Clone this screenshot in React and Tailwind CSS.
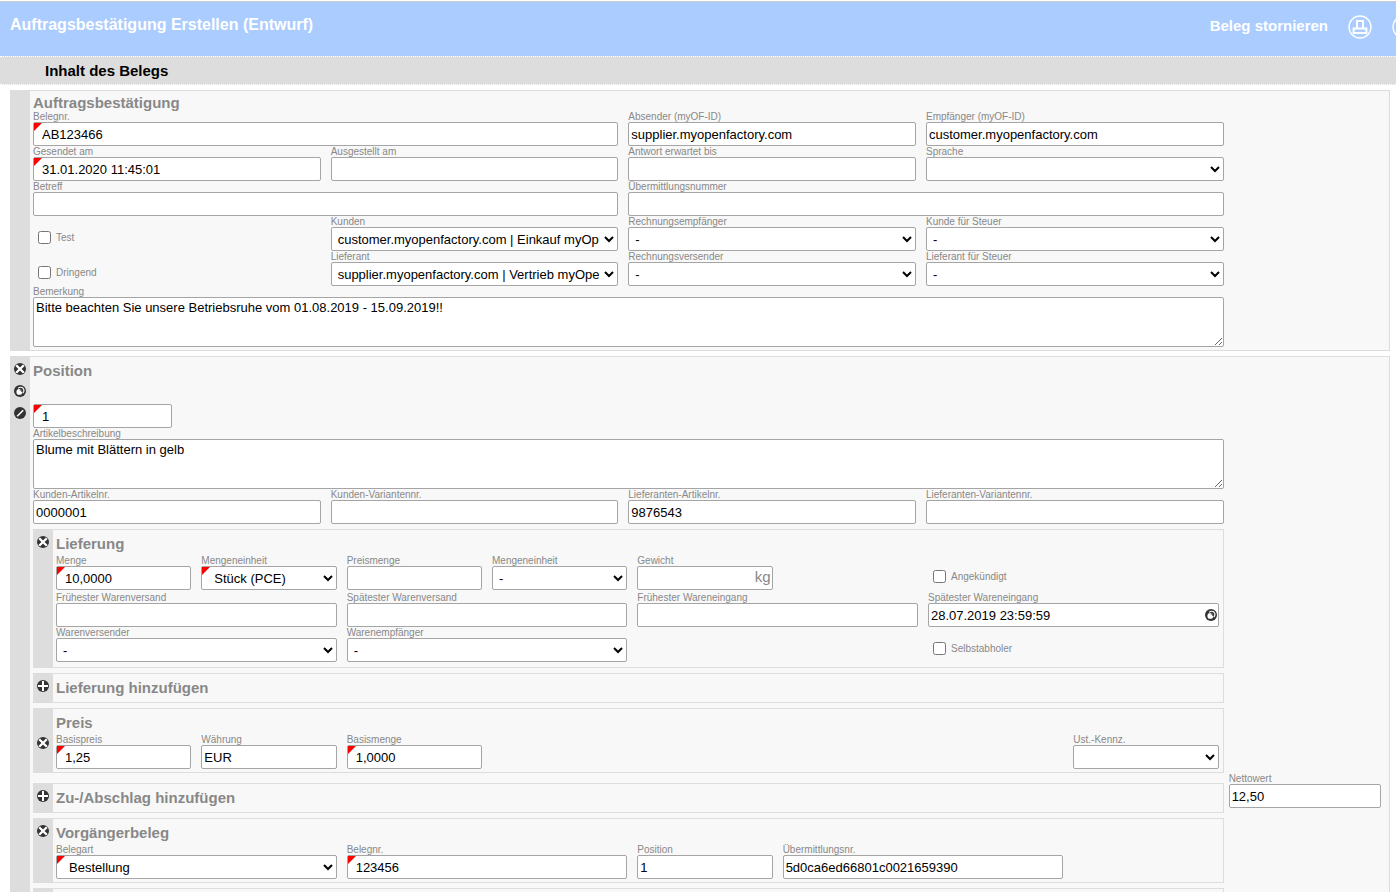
import React, { useId } from "react";

const CONTROL =
  "block h-6 w-full rounded-xs border border-[#a5a5a5] bg-white text-[13px] text-black";

function RequiredMark() {
  return (
    <svg
      className="pointer-events-none absolute left-px top-px size-2"
      viewBox="0 0 8 8"
      aria-hidden="true"
    >
      <path d="M0 0H8L0 8Z" fill="#f00" />
    </svg>
  );
}

function Field({ label, value = "", required = false, span = "", last = false, children }) {
  const id = useId();
  return (
    <div className={`min-w-0 ${span} ${last ? "" : "pr-2.5"}`}>
      <label htmlFor={id} className="block h-[11px] text-[10px] leading-[11px] whitespace-nowrap text-[#888]">
        {label}
      </label>
      <div className="relative">
        <input id={id} type="text" defaultValue={value} className={`${CONTROL} ${required ? "pl-2" : "pl-0.5"}`} />
        {required && <RequiredMark />}
        {children}
      </div>
    </div>
  );
}

function SelectField({ label, value = "-", required = false, span = "", last = false }) {
  const id = useId();
  return (
    <div className={`min-w-0 ${span} ${last ? "" : "pr-2.5"}`}>
      <label htmlFor={id} className="block h-[11px] text-[10px] leading-[11px] whitespace-nowrap text-[#888]">
        {label}
      </label>
      <div className="relative">
        <select id={id} className={`${CONTROL} pr-0.5 ${required ? "pl-2" : "pl-0.5"}`}>
          <option>{value}</option>
        </select>
        {required && <RequiredMark />}
      </div>
    </div>
  );
}

function TextArea({ label, value }) {
  const id = useId();
  return (
    <div>
      <label htmlFor={id} className="block h-[11px] text-[10px] leading-[11px] text-[#888]">
        {label}
      </label>
      <textarea
        id={id}
        defaultValue={value}
        className="block h-[50px] w-full rounded-xs border border-[#a5a5a5] bg-white px-0.5 py-0.5 text-[13px] leading-4 text-black"
      />
    </div>
  );
}

function Check({ label, span = "" }) {
  return (
    <div className={`flex items-center pt-2 pl-[5px] ${span}`}>
      <label className="flex items-center gap-[5px] text-[10px] leading-[11px] text-[#888]">
        <input type="checkbox" className="size-[13px]" />
        {label}
      </label>
    </div>
  );
}

function Glyph({ kind }) {
  return (
    <svg className="size-3" viewBox="0 0 12 12" aria-hidden="true">
      <circle cx="6" cy="6" r="6" fill="#333" />
      {kind === "remove" && (
        <path d="M2.2 2.2L9.8 9.8M9.8 2.2L2.2 9.8" stroke="#fff" strokeWidth="2.3" />
      )}
      {kind === "add" && <path d="M6 1V11M1 6H11" stroke="#fff" strokeWidth="2" />}
      {kind === "edit" && <path d="M3.2 9.2L9.2 3.2" stroke="#fff" strokeWidth="1.6" />}
      {kind === "copy" && (
        <>
          <path d="M4.2 3.4C5.6 1.8 8.6 1.9 9.6 4C10.3 5.6 9.8 7.2 8.7 8.2" fill="none" stroke="#fff" strokeWidth="1.1" />
          <circle cx="5.3" cy="6.9" r="2.9" fill="#fff" />
          <path d="M5.6 4.9H7.4V6.8" fill="none" stroke="#333" strokeWidth="0.9" />
        </>
      )}
    </svg>
  );
}

function IconButton({ kind, label }) {
  return (
    <button type="button" aria-label={label} className="block size-3 cursor-pointer">
      <Glyph kind={kind} />
    </button>
  );
}

function Card({ icons, iconPad = "pt-[7px]", pad = "pr-[3px] pb-[3px]", children }) {
  return (
    <section className="flex border border-l-0 border-[#ddd] bg-[#f8f8f8]">
      <div className={`-my-px flex w-5 shrink-0 flex-col items-center gap-2.5 bg-[#ddd] ${iconPad}`}>
        {icons}
      </div>
      <div className={`min-w-0 flex-1 pl-[3px] ${pad}`}>{children}</div>
    </section>
  );
}

function Heading({ children }) {
  return <h2 className="pt-[3px] text-[15px] leading-[22px] font-bold text-[#888]">{children}</h2>;
}

function HeaderIcon({ label, children }) {
  return (
    <button type="button" aria-label={label} className="size-6 shrink-0 cursor-pointer">
      <svg className="size-6" viewBox="0 0 24 24" fill="none" stroke="#fff" aria-hidden="true">
        <circle cx="12" cy="12" r="11" strokeWidth="1.3" />
        {children}
      </svg>
    </button>
  );
}

const remove = <IconButton kind="remove" label="Entfernen" />;
const add = <IconButton kind="add" label="Hinzufügen" />;
const SPLIT = "grid grid-cols-[minmax(0,88fr)_minmax(0,12fr)]";

export default function App() {
  return (
    <div className="h-screen overflow-hidden bg-white font-['Liberation_Sans',Arial,sans-serif]">
      <header className="mt-px flex h-[55px] items-start justify-between overflow-hidden border-t border-[#ccc] bg-[#aaccff] pl-2.5 text-white">
        <h1 className="pt-[13px] text-[16px] leading-5 font-bold whitespace-nowrap">
          Auftragsbestätigung Erstellen (Entwurf)
        </h1>
        <nav className="-mr-5 flex items-start gap-5 pt-[13px]">
          <a href="#stornieren" className="text-[15px] leading-[22px] font-bold whitespace-nowrap">
            Beleg stornieren
          </a>
          <HeaderIcon label="Drucken">
            <path d="M9 13.4V6H15V13.4M5.6 13.4H18.4V18H5.6Z" strokeWidth="2" />
          </HeaderIcon>
          <HeaderIcon label="Hilfe" />
        </nav>
      </header>
      <div className="border-y border-dotted border-white bg-[#ddd] pl-[45px]">
        <h2 className="text-[15px] leading-[27px] font-bold text-black">Inhalt des Belegs</h2>
      </div>

      <form className="flex flex-col gap-[5px] px-2.5 pt-[5px] pr-1.5">
        <Card>
          <div className={SPLIT}>
            <div>
              <h2 className="pt-[3px] text-[15px] leading-[17px] font-bold text-[#888]">Auftragsbestätigung</h2>
              <div className="grid grid-cols-4">
                <Field label="Belegnr." value="AB123466" required span="col-span-2" />
                <Field label="Absender (myOF-ID)" value="supplier.myopenfactory.com" />
                <Field label="Empfänger (myOF-ID)" value="customer.myopenfactory.com" last />
                <Field label="Gesendet am" value="31.01.2020 11:45:01" required />
                <Field label="Ausgestellt am" />
                <Field label="Antwort erwartet bis" />
                <SelectField label="Sprache" value="" last />
                <Field label="Betreff" span="col-span-2" />
                <Field label="Übermittlungsnummer" span="col-span-2" last />
                <Check label="Test" />
                <SelectField label="Kunden" value="customer.myopenfactory.com | Einkauf myOpenFactory" />
                <SelectField label="Rechnungsempfänger" />
                <SelectField label="Kunde für Steuer" last />
                <Check label="Dringend" />
                <SelectField label="Lieferant" value="supplier.myopenfactory.com | Vertrieb myOpenFactory" />
                <SelectField label="Rechnungsversender" />
                <SelectField label="Lieferant für Steuer" last />
              </div>
              <TextArea
                label="Bemerkung"
                value="Bitte beachten Sie unsere Betriebsruhe vom 01.08.2019 - 15.09.2019!!"
              />
            </div>
          </div>
        </Card>

        <Card
          icons={
            <>
              <IconButton kind="remove" label="Position entfernen" />
              <IconButton kind="copy" label="Position kopieren" />
              <IconButton kind="edit" label="Position bearbeiten" />
            </>
          }
        >
          <div className={`${SPLIT} gap-y-[5px]`}>
            <div>
              <Heading>Position</Heading>
              <div className="grid grid-cols-8 pt-[22px]">
                <div className="pr-2.5">
                  <div className="relative">
                    <input type="text" aria-label="Position" defaultValue="1" className={`${CONTROL} pl-2`} />
                    <RequiredMark />
                  </div>
                </div>
              </div>
              <TextArea label="Artikelbeschreibung" value="Blume mit Blättern in gelb" />
              <div className="grid grid-cols-4">
                <Field label="Kunden-Artikelnr." value="0000001" />
                <Field label="Kunden-Variantennr." />
                <Field label="Lieferanten-Artikelnr." value="9876543" />
                <Field label="Lieferanten-Variantennr." last />
              </div>
            </div>

            <div className="col-start-1">
              <Card icons={remove} pad="pr-1 pb-[5px]">
                <Heading>Lieferung</Heading>
                <div className="grid grid-cols-8 pb-0.5">
                  <Field label="Menge" value="10,0000" required />
                  <SelectField label="Mengeneinheit" value="Stück (PCE)" required />
                  <Field label="Preismenge" />
                  <SelectField label="Mengeneinheit" />
                  <Field label="Gewicht">
                    <span className="pointer-events-none absolute top-0 right-0.5 text-[15px] leading-[22px] text-[#888]">
                      kg
                    </span>
                  </Field>
                  <Check label="Angekündigt" span="col-start-7 col-span-2" />
                </div>
                <div className="grid grid-cols-4">
                  <Field label="Frühester Warenversand" />
                  <Field label="Spätester Warenversand" />
                  <Field label="Frühester Wareneingang" />
                  <Field label="Spätester Wareneingang" value="28.07.2019 23:59:59" last>
                    <span className="absolute top-1.5 right-0.5">
                      <IconButton kind="copy" label="Datum kopieren" />
                    </span>
                  </Field>
                  <SelectField label="Warenversender" />
                  <SelectField label="Warenempfänger" />
                  <Check label="Selbstabholer" span="col-start-4" />
                </div>
              </Card>
            </div>

            <div className="col-start-1">
              <Card icons={add}>
                <Heading>Lieferung hinzufügen</Heading>
              </Card>
            </div>

            <div className="col-start-1 -mb-[5px]">
              <Card icons={remove} iconPad="pt-[29px]" pad="pr-1 pb-[3px]">
                <Heading>Preis</Heading>
                <div className="grid grid-cols-8">
                  <Field label="Basispreis" value="1,25" required />
                  <Field label="Währung" value="EUR" />
                  <Field label="Basismenge" value="1,0000" required />
                  <SelectField label="Ust.-Kennz." value="" span="col-start-8" last />
                </div>
              </Card>
            </div>

            <div className="col-start-1 pt-2.5">
              <Card icons={add}>
                <Heading>Zu-/Abschlag hinzufügen</Heading>
              </Card>
            </div>
            <div className="px-[5px]">
              <Field label="Nettowert" value="12,50" last />
            </div>

            <div className="col-start-1">
              <Card icons={remove} pad="pr-1 pb-[3px]">
                <Heading>Vorgängerbeleg</Heading>
                <div className="grid grid-cols-8">
                  <SelectField label="Belegart" value="Bestellung" required span="col-span-2" />
                  <Field label="Belegnr." value="123456" required span="col-span-2" />
                  <Field label="Position" value="1" />
                  <Field label="Übermittlungsnr." value="5d0ca6ed66801c0021659390" span="col-span-2" />
                </div>
              </Card>
            </div>

            <div className="col-start-1">
              <Card>
                <div className="h-7" />
              </Card>
            </div>
          </div>
        </Card>
      </form>
    </div>
  );
}
